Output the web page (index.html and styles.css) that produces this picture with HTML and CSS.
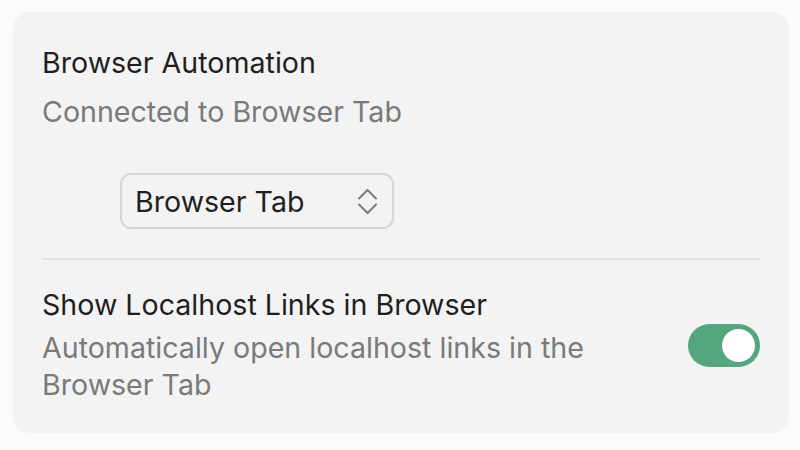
FILE: index.html
```html
<!DOCTYPE html>
<html>
<head>
<meta charset="utf-8">
<link rel="stylesheet" href="styles.css">
</head>
<body>
<div class="card">
  <section class="group">
    <div class="title">Browser Automation</div>
    <div class="desc">Connected to Browser Tab</div>
    <div class="select-row">
      <div class="select">
        <span>Browser Tab</span>
        <svg class="chev" width="21" height="27" viewBox="0 0 21 27">
          <path d="M2 10.5 L10.5 2 L19 10.5" fill="none" stroke="#7a7a7a" stroke-width="2" stroke-linecap="round" stroke-linejoin="round"/>
          <path d="M2 16.5 L10.5 25 L19 16.5" fill="none" stroke="#7a7a7a" stroke-width="2" stroke-linecap="round" stroke-linejoin="round"/>
        </svg>
      </div>
    </div>
  </section>
  <div class="divider"></div>
  <section class="row">
    <div class="row-text">
      <div class="title">Show Localhost Links in Browser</div>
      <div class="desc">Automatically open localhost links in the<br>Browser Tab</div>
    </div>
    <div class="toggle"><div class="knob"></div></div>
  </section>
</div>
</body>
</html>
```
FILE: styles.css
```css
html, body { margin: 0; padding: 0; }
body {
  background: #fbfbfb;
  font-family: Inter, "Noto Sans", sans-serif;
  width: 800px;
  height: 450px;
  padding: 12px 11px 0 13px;
  box-sizing: border-box;
}
.card {
  background: #f3f3f3;
  border-radius: 17px;
  height: 421px;
  box-sizing: border-box;
  padding: 32px 29px 0 29px;
}
.title {
  font-size: 28.6px;
  color: #1f1f1f;
  line-height: 37px;
}
.desc {
  font-size: 28.6px;
  color: #7a7a7a;
  line-height: 37px;
}
.group .desc { margin-top: 12px; }
.row .desc { margin-top: 6px; }
.select-row {
  padding-left: 78px;
  margin-top: 43px;
}
.select {
  width: 274px;
  height: 56px;
  box-sizing: border-box;
  border: 2px solid #d6d6d6;
  border-radius: 11px;
  display: flex;
  align-items: center;
  justify-content: space-between;
  padding: 0 14px 0 13px;
  font-size: 28.6px;
  color: #1f1f1f;
}
.chev { display: block; }
.divider {
  height: 2px;
  background: #e2e2e2;
  margin-top: 29px;
}
.row {
  display: flex;
  align-items: center;
  justify-content: space-between;
  padding-top: 26px;
}
.toggle {
  width: 72px;
  height: 43px;
  border-radius: 22px;
  background: #55a67f;
  display: flex;
  align-items: center;
  justify-content: flex-end;
  padding-right: 5px;
  box-sizing: border-box;
  margin-top: 2px;
}
.knob {
  width: 33px;
  height: 33px;
  border-radius: 50%;
  background: #ffffff;
}
```
